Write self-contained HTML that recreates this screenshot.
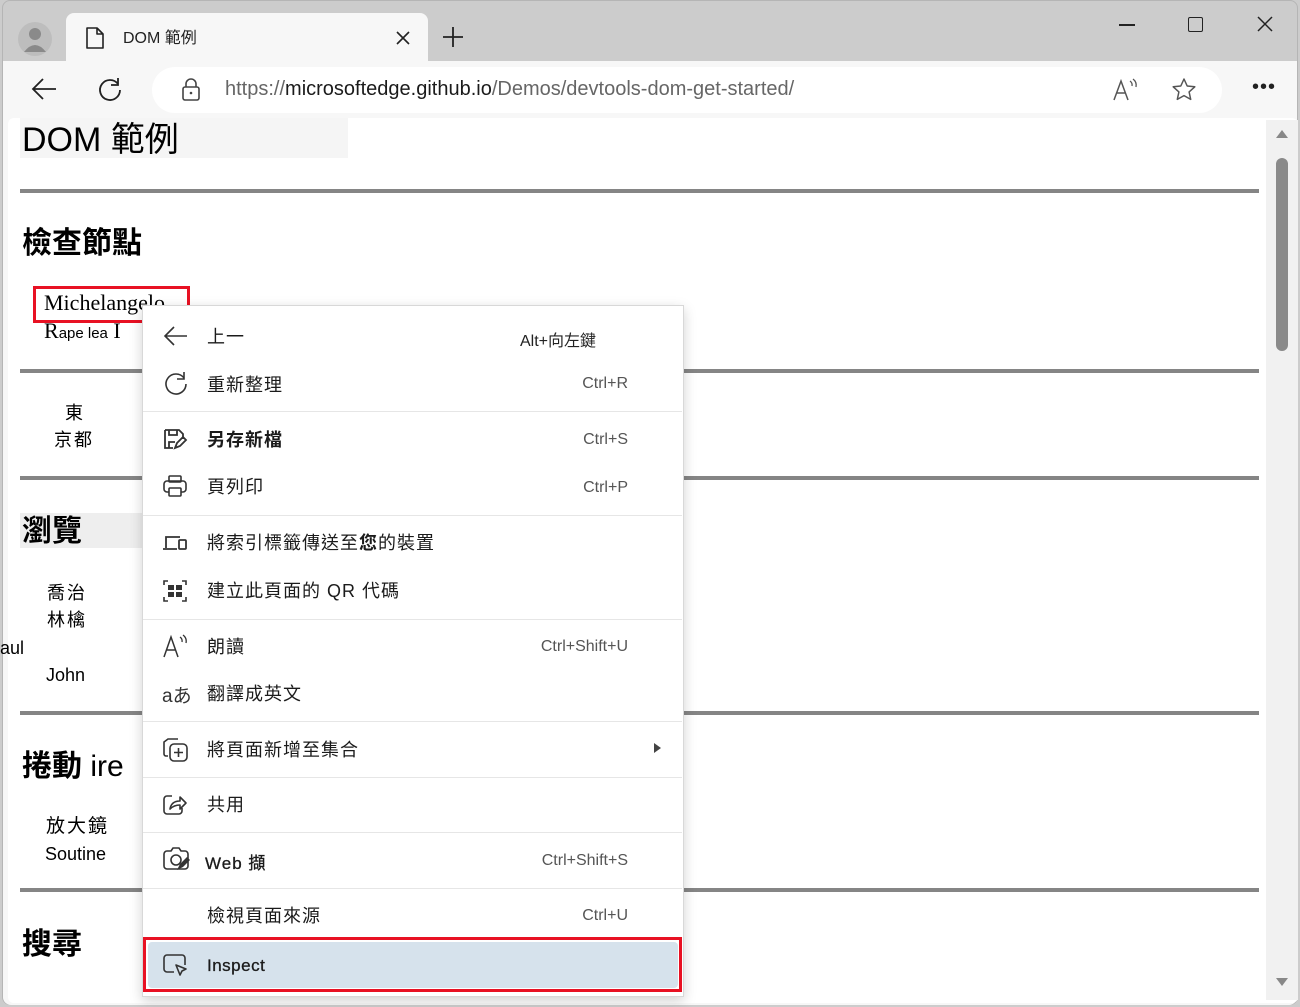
<!DOCTYPE html>
<html><head><meta charset="utf-8"><style>
*{margin:0;padding:0;box-sizing:border-box}
body{width:1300px;height:1007px;overflow:hidden;background:#ccc;font-family:"Liberation Sans","Noto Sans CJK TC",sans-serif;position:relative}
.a{position:absolute}
.hr{position:absolute;left:20px;width:1239px;height:4px;background:#858585}
.mi{position:absolute;left:207px;font-size:18px;color:#1b1b1b;font-family:"Liberation Sans","Noto Sans CJK TC",sans-serif;letter-spacing:1px}
.sc{position:absolute;right:672px;font-size:16px;color:#555;text-align:right}
.sep{position:absolute;left:143px;width:539px;height:1px;background:#e6e6e6}
.ic{position:absolute;left:162px}
</style></head><body>
<div class="a" style="left:2px;top:0;width:1296px;height:1005px;border-radius:8px;background:#ccc;border:1px solid #b5b5b5"></div>
<svg class="a" style="left:16px;top:20px" width="38" height="38"><circle cx="19" cy="19" r="17" fill="#bdbdbd"/><circle cx="19" cy="14" r="6" fill="#8a8a8a"/><path d="M8 32 Q19 18 30 32Z" fill="#8a8a8a"/></svg>
<div class="a" style="left:66px;top:13px;width:362px;height:48px;background:#f7f7f7;border-radius:8px 8px 0 0"></div>
<svg class="a" style="left:84px;top:26px" width="22" height="24"><path d="M3 2h10l6 6v14H3z M13 2v6h6" fill="none" stroke="#222" stroke-width="1.6" stroke-linejoin="round"/></svg>
<div class="a" style="left:123px;top:24px;font-size:16px;color:#222">DOM 範例</div>
<svg class="a" style="left:395px;top:30px" width="16" height="16"><path d="M2 2L14 14M14 2L2 14" stroke="#222" stroke-width="1.6"/></svg>
<svg class="a" style="left:441px;top:25px" width="24" height="24"><path d="M12 2V22M2 12H22" stroke="#222" stroke-width="1.8"/></svg>
<div class="a" style="left:1119px;top:24px;width:16px;height:1.5px;background:#222"></div>
<div class="a" style="left:1188px;top:17px;width:15px;height:15px;border:1.5px solid #222;border-radius:2px"></div>
<svg class="a" style="left:1257px;top:16px" width="16" height="16"><path d="M1 1L15 15M15 1L1 15" stroke="#222" stroke-width="1.5"/></svg>
<div class="a" style="left:3px;top:61px;width:1294px;height:944px;background:#f7f7f7;border-radius:0 0 8px 8px"></div>
<svg class="a" style="left:30px;top:77px" width="28" height="24"><path d="M26 12H3M13 2L3 12L13 22" fill="none" stroke="#222" stroke-width="1.8"/></svg>
<svg class="a" style="left:96px;top:76px" width="28" height="28"><path d="M22 8A10 10 0 1 0 24 14" fill="none" stroke="#222" stroke-width="1.8"/><path d="M22 2V9H15" fill="none" stroke="#222" stroke-width="1.8"/></svg>
<div class="a" style="left:152px;top:67px;width:1070px;height:46px;background:#fff;border-radius:23px"></div>
<svg class="a" style="left:180px;top:78px" width="22" height="24"><rect x="3" y="9" width="16" height="13" rx="2" fill="none" stroke="#444" stroke-width="1.6"/><path d="M6 9V6a5 5 0 0 1 10 0v3" fill="none" stroke="#444" stroke-width="1.6"/><circle cx="11" cy="15" r="1.3" fill="#444"/></svg>
<div class="a" style="left:225px;top:78px;font-size:20px;color:#666">https://<span style="color:#1b1b1b">microsoftedge.github.io</span>/Demos/devtools-dom-get-started/</div>
<svg class="a" style="left:1112px;top:78px" width="28" height="24"><path d="M2 22L9 3L16 22M5 15H13" fill="none" stroke="#555" stroke-width="1.5"/><path d="M18 3a5 5 0 0 1 2 5M21 1a8 8 0 0 1 3 8" fill="none" stroke="#555" stroke-width="1.3"/></svg>
<svg class="a" style="left:1171px;top:77px" width="26" height="26"><path d="M13 2l3.2 7 7.6.8-5.7 5.1 1.6 7.5L13 18.6 6.3 22.4l1.6-7.5L2.2 9.8 9.8 9z" fill="none" stroke="#555" stroke-width="1.5" stroke-linejoin="round"/></svg>
<div class="a" style="left:1252px;top:76px;font-size:20px;color:#222;letter-spacing:1px">•••</div>
<div class="a" style="left:8px;top:118px;width:1290px;height:885px;background:#fff;border-radius:6px"></div>
<div class="a" style="left:1266px;top:120px;width:32px;height:880px;background:#f1f1f1"></div>
<div class="a" style="left:1276px;top:130px;width:0;height:0;border-left:6px solid transparent;border-right:6px solid transparent;border-bottom:8px solid #888"></div>
<div class="a" style="left:1276px;top:158px;width:12px;height:193px;background:#8a8a8a;border-radius:6px"></div>
<div class="a" style="left:1276px;top:978px;width:0;height:0;border-left:6px solid transparent;border-right:6px solid transparent;border-top:8px solid #888"></div>

<div class="a" style="left:20px;top:118px;width:328px;height:40px;background:#f5f5f5"></div>
<div class="a" style="left:22px;top:112px;font-size:34px;color:#000">DOM 範例</div>
<div class="hr" style="top:189px"></div>
<div class="a" style="left:22px;top:218px;font-size:30px;font-weight:bold;color:#000">檢查節點</div>
<div class="a" style="left:44px;top:290px;font-size:22px;font-family:'Liberation Serif',serif;color:#000">Michelangelo</div>
<div class="a" style="left:44px;top:318px;font-size:22px;font-family:'Liberation Serif',serif;color:#000">R<span style="font-family:'Liberation Sans';font-size:15px">ape lea</span> I</div>
<div class="a" style="left:33px;top:286px;width:157px;height:37px;border:3px solid #e81123"></div>
<div class="hr" style="top:369px"></div>
<div class="a" style="left:65px;top:399px;font-size:18px">東</div>
<div class="a" style="left:54px;top:426px;font-size:18px;letter-spacing:2px">京都</div>
<div class="hr" style="top:476px"></div>
<div class="a" style="left:20px;top:513px;width:125px;height:35px;background:#eee"></div>
<div class="a" style="left:22px;top:506px;font-size:30px;font-weight:bold">瀏覽</div>
<div class="a" style="left:47px;top:579px;font-size:18px;letter-spacing:2px">喬治</div>
<div class="a" style="left:47px;top:606px;font-size:18px;letter-spacing:2px">林檎</div>
<div class="a" style="left:0;top:638px;font-size:18px">aul</div>
<div class="a" style="left:46px;top:665px;font-size:18px">John</div>
<div class="hr" style="top:711px"></div>
<div class="a" style="left:22px;top:741px;font-size:30px;font-weight:bold">捲動 <span style="font-weight:normal">ire</span></div>
<div class="a" style="left:46px;top:811px;font-size:19px;letter-spacing:2px">放大鏡</div>
<div class="a" style="left:45px;top:844px;font-size:18px">Soutine</div>
<div class="hr" style="top:888px"></div>
<div class="a" style="left:22px;top:919px;font-size:30px;font-weight:bold">搜尋</div>

<div class="a" style="left:142px;top:305px;width:542px;height:692px;background:#fff;border:1px solid #d8d8d8;box-shadow:0 4px 12px rgba(0,0,0,.18)"></div>
<svg class="ic" style="top:324px" width="28" height="24"><path d="M25 12H3M12 3L3 12L12 21" fill="none" stroke="#333" stroke-width="1.6"/></svg>
<div class="mi" style="top:323px">上一</div><div class="sc" style="top:327px;color:#222;right:704px">Alt+向左鍵</div>
<svg class="ic" style="top:370px" width="28" height="28"><path d="M22 8A10 10 0 1 0 24 14" fill="none" stroke="#333" stroke-width="1.6"/><path d="M22 2V9H15" fill="none" stroke="#333" stroke-width="1.6"/></svg>
<div class="mi" style="top:371px">重新整理</div><div class="sc" style="top:375px">Ctrl+R</div>
<div class="sep" style="top:411px"></div>
<svg class="ic" style="top:427px" width="26" height="24"><path d="M3 3h14l4 4v5M3 3v18h8M7 3v5h8V3M7 21v-6h6" fill="none" stroke="#333" stroke-width="1.8"/><path d="M13 21l2-5 6-6 3 3-6 6z" fill="none" stroke="#333" stroke-width="1.8"/></svg>
<div class="mi" style="top:426px;font-weight:bold">另存新檔</div><div class="sc" style="top:431px">Ctrl+S</div>
<svg class="ic" style="top:474px" width="26" height="24"><rect x="7" y="2" width="12" height="6" rx="1" fill="none" stroke="#333" stroke-width="1.6"/><rect x="2" y="7" width="22" height="11" rx="3" fill="none" stroke="#333" stroke-width="1.6"/><rect x="7" y="14" width="12" height="8" rx="1" fill="#fff" stroke="#333" stroke-width="1.6"/></svg>
<div class="mi" style="top:473px">頁列印</div><div class="sc" style="top:479px">Ctrl+P</div>
<div class="sep" style="top:515px"></div>
<svg class="ic" style="top:532px" width="26" height="22"><path d="M4 16V5h14M1 17h14" fill="none" stroke="#333" stroke-width="1.8"/><rect x="17" y="8" width="7" height="9" rx="1" fill="none" stroke="#333" stroke-width="1.8"/></svg>
<div class="mi" style="top:529px">將索引標籤傳送至<b>您</b>的裝置</div>
<svg class="ic" style="top:578px" width="26" height="26"><path d="M2 7V3h4M20 3h4v4M24 19v4h-4M6 23H2v-4" fill="none" stroke="#333" stroke-width="1.6"/><rect x="6" y="7" width="6" height="5" fill="#333"/><rect x="14" y="7" width="6" height="5" fill="#333"/><rect x="6" y="14" width="6" height="5" fill="#333"/><rect x="14" y="14" width="6" height="5" fill="#333"/></svg>
<div class="mi" style="top:577px">建立此頁面的 QR 代碼</div>
<div class="sep" style="top:619px"></div>
<svg class="ic" style="top:633px" width="28" height="26"><path d="M2 24L9 4L16 24M5 17H13" fill="none" stroke="#333" stroke-width="1.5"/><path d="M18 4a5 5 0 0 1 2 5M21 2a8 8 0 0 1 3 8" fill="none" stroke="#333" stroke-width="1.3"/></svg>
<div class="mi" style="top:633px">朗讀</div><div class="sc" style="top:638px">Ctrl+Shift+U</div>
<div class="a" style="left:162px;top:681px;font-size:19px;color:#333">aあ</div>
<div class="mi" style="top:680px">翻譯成英文</div>
<div class="sep" style="top:721px"></div>
<svg class="ic" style="top:736px" width="28" height="28"><path d="M6 20H4a2 2 0 0 1-2-2V6l4-3h10" fill="none" stroke="#333" stroke-width="1.6"/><rect x="8" y="8" width="17" height="17" rx="4" fill="none" stroke="#333" stroke-width="1.6"/><path d="M16.5 12v9M12 16.5h9" stroke="#333" stroke-width="1.6"/></svg>
<div class="mi" style="top:736px">將頁面新增至集合</div>
<div class="a" style="left:654px;top:743px;width:0;height:0;border-top:5px solid transparent;border-bottom:5px solid transparent;border-left:7px solid #444"></div>
<div class="sep" style="top:777px"></div>
<svg class="ic" style="top:792px" width="26" height="24"><path d="M10 4H5a3 3 0 0 0-3 3v12a3 3 0 0 0 3 3h12a3 3 0 0 0 3-3v-3" fill="none" stroke="#333" stroke-width="1.6"/><path d="M8 17c1-6 5-8 10-8V5l6 6-6 6v-4c-4 0-7 1-10 4z" fill="none" stroke="#333" stroke-width="1.6" stroke-linejoin="round"/></svg>
<div class="mi" style="top:791px">共用</div>
<div class="sep" style="top:832px"></div>
<svg class="ic" style="top:846px" width="28" height="28"><path d="M9 5l2-3h6l2 3h4a3 3 0 0 1 3 3v12a3 3 0 0 1-3 3H5a3 3 0 0 1-3-3V8a3 3 0 0 1 3-3z" fill="none" stroke="#333" stroke-width="1.6"/><circle cx="14" cy="14" r="5" fill="none" stroke="#333" stroke-width="1.6"/><path d="M15 24l3-6 7-7 3 3-7 7z" fill="#333"/></svg>
<div class="mi" style="top:849px;left:205px;font-size:17px;-webkit-text-stroke:.3px #1b1b1b">Web 擷</div><div class="sc" style="top:852px">Ctrl+Shift+S</div>
<div class="sep" style="top:888px"></div>
<div class="mi" style="top:902px">檢視頁面來源</div><div class="sc" style="top:907px">Ctrl+U</div>
<div class="a" style="left:148px;top:942px;width:530px;height:46px;background:#d6e2ec;border-radius:4px"></div>
<div class="a" style="left:143px;top:937px;width:539px;height:55px;border:3px solid #e81123"></div>
<svg class="ic" style="top:953px" width="28" height="26"><path d="M12 19H5a3 3 0 0 1-3-3V5a3 3 0 0 1 3-3h15a3 3 0 0 1 3 3v7" fill="none" stroke="#333" stroke-width="1.6"/><path d="M14 12l10 4-4 2-2 4z" fill="none" stroke="#333" stroke-width="1.6" stroke-linejoin="round"/></svg>
<div class="mi" style="top:956px;font-size:17px;letter-spacing:.5px;-webkit-text-stroke:.3px #1b1b1b">Inspect</div>
</body></html>
